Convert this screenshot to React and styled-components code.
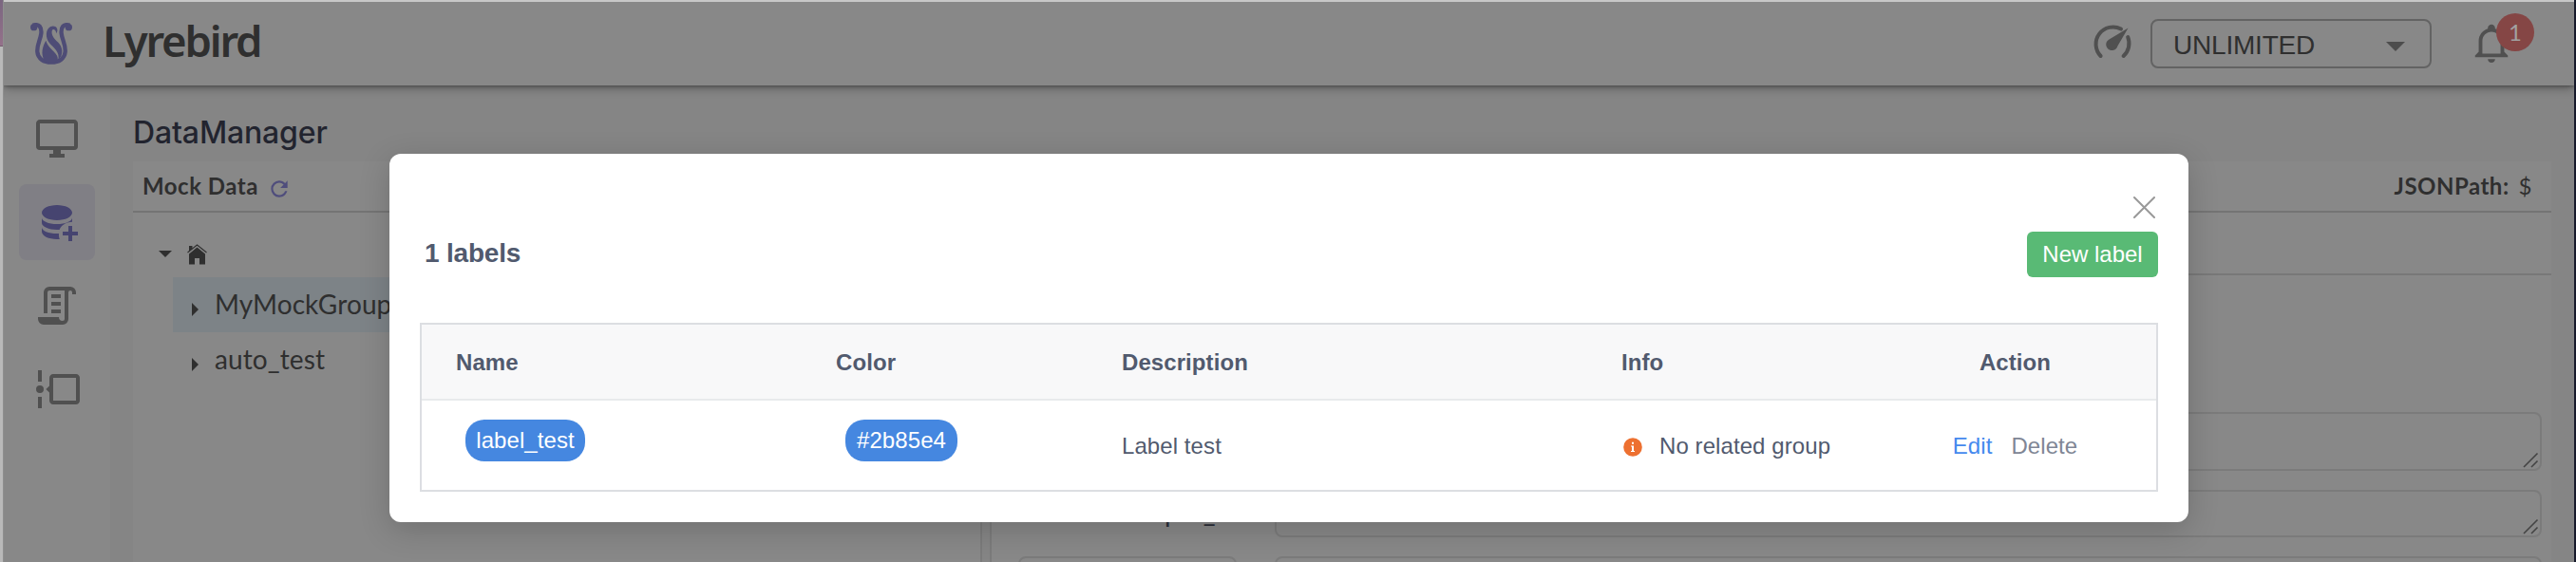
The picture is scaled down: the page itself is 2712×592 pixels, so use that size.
import React from "react";
import styled, { createGlobalStyle } from "styled-components";

const Global = createGlobalStyle`
  *{box-sizing:border-box}
  body{margin:0;overflow:hidden;background:#b9b9b9}
  svg{display:block;flex:none}
`;
const sans = `"Liberation Sans", Arial, sans-serif`;
const lato = `Lato, "Open Sans", sans-serif`;

const Screen = styled.div`
  width: 2712px;
  height: 592px;
  overflow: hidden;
  position: relative;
  display: grid;
  grid-template-columns: 4px 1fr 2px;
  background: #888;
`;
const LeftEdge = styled.div`
  display: flex;
  flex-direction: column;
  background: #b9b9b9;
  border-right: 1px solid #8f8f8f;
  &::before {
    content: "";
    height: 48px;
    background: linear-gradient(#7a6680, #94718a);
    border-bottom: 1px solid #735f6e;
  }
`;
const RightEdge = styled.div`
  background: #171a2b;
`;
const Page = styled.div`
  display: flex;
  flex-direction: column;
  height: 592px;
  border-top: 2px solid #c8c8c8;
  min-width: 0;
  overflow: hidden;
`;
const Header = styled.header`
  flex: none;
  height: 88px;
  display: flex;
  align-items: center;
  padding: 0 62px 0 28px;
  background: #888;
  box-shadow: 0 2px 10px rgba(0, 0, 0, 0.38), 0 1px 3px rgba(0, 0, 0, 0.25);
  z-index: 1;
`;
const Brand = styled.h1`
  margin: -9px 0 0 32px;
  font: 600 45.5px/60px "Noto Sans", sans-serif;
  color: #2f2f2f;
  letter-spacing: -2.2px;
  flex: 1;
`;
const Select = styled.div`
  width: 296px;
  height: 52px;
  margin: 0 40px 0 16px;
  padding: 4px 26px 0 22px;
  border: 2px solid #636363;
  border-radius: 8px;
  display: flex;
  align-items: center;
  justify-content: space-between;
  font: 28px/1 ${sans};
  letter-spacing: -0.2px;
  color: #2f2f2f;
`;
const Caret = styled.i`
  border: 10px solid transparent;
  border-top-color: #4d4d4d;
  border-bottom: 0;
  margin-top: 2px;
`;
const BellWrap = styled.div`
  position: relative;
  width: 48px;
  height: 48px;
`;
const Badge = styled.span`
  position: absolute;
  left: 28px;
  top: -8px;
  width: 40px;
  height: 40px;
  border-radius: 50%;
  background: #854645;
  font: 24px/40px ${lato};
  color: #a2a2a2;
  text-align: center;
`;
const Body = styled.div`
  flex: 1;
  display: flex;
  min-height: 0;
`;
const Side = styled.nav`
  width: 112px;
  padding: 16px;
  display: flex;
  flex-direction: column;
  gap: 8px;
  background: #888;
`;
const NavItem = styled.div`
  height: 80px;
  border-radius: 8px;
  display: grid;
  place-items: center;
  background: ${p => (p.$active ? "#807f85" : "transparent")};
`;
const Main = styled.main`
  flex: 1;
  background: #858585;
  padding: 0 24px;
  min-width: 0;
`;
const Title = styled.h2`
  margin: 27px 0 8px;
  font: 500 32px/45px Inter, sans-serif;
  letter-spacing: -0.15px;
  color: #22242f;
`;
const Panels = styled.div`
  display: flex;
  gap: 8px;
  height: 422px;
`;
const Panel = styled.section`
  background: #888;
  width: ${p => (p.$w ? p.$w + "px" : "auto")};
  flex: ${p => (p.$w ? "none" : 1)};
  ${p => (p.$w ? "border-right" : "border-left")}: 2px solid #7b7b7b;
`;
const PanelHead = styled.div`
  height: 54px;
  border-bottom: 2px solid #747474;
  padding: 0 20px 0 10px;
  display: flex;
  align-items: center;
  gap: 10px;
  font: 700 24px/1 ${lato};
  letter-spacing: 0.5px;
  color: #2f2f2f;
  justify-content: ${p => (p.$end ? "flex-end" : "flex-start")};
  svg {
    margin: 6px 0 0 -1px;
  }
`;
const Light = styled.span`
  font-weight: 400;
`;
const Tree = styled.div`
  padding: 14px 0 0 42px;
`;
const Root = styled.div`
  height: 54px;
  display: flex;
  align-items: center;
  gap: 16px;
  margin-left: -15px;
  padding-top: 5px;
`;
const Node = styled.div`
  height: 58px;
  display: flex;
  align-items: center;
  font: 28px/54px ${lato};
  letter-spacing: 0.1px;
  color: #2f2f2f;
  padding: 0 0 3px 20px;
  background: ${p => (p.$on ? "#7d8387" : "transparent")};
`;
const Arrow = styled.i`
  border: 7px solid transparent;
  border-left-color: #2f2f2f;
  border-right: 0;
  margin: 12px 17px 0 0;
`;
const Down = styled.i`
  border: 7px solid transparent;
  border-top-color: #2f2f2f;
  border-bottom: 0;
`;
const Toolbar = styled.div`
  height: 66px;
  border-bottom: 2px solid #787878;
`;
const Form = styled.div`
  padding: 144px 10px 0 28px;
  display: flex;
  flex-direction: column;
  gap: 20px;
`;
const Field = styled.div`
  display: grid;
  grid-template-columns: 230px 1fr;
  column-gap: 40px;
  height: ${p => p.$h}px;
`;
const FieldLabel = styled.div`
  font: 28px/46px ${lato};
  color: #2b2f39;
  text-align: right;
`;
const Box = styled.div`
  border: 2px solid #7b7b7b;
  border-radius: 8px;
  display: flex;
  align-items: flex-end;
  justify-content: flex-end;
  padding: 1px;
`;
const Modal = styled.div`
  position: absolute;
  left: 410px;
  top: 162px;
  width: 1894px;
  height: 388px;
  border-radius: 12px;
  background: #fff;
  box-shadow: 0 8px 32px rgba(0, 0, 0, 0.18);
  padding: 44px 32px 32px;
  display: flex;
  flex-direction: column;
`;
const CloseRow = styled.div`
  display: flex;
  justify-content: flex-end;
  height: 38px;
  padding: 1px 3px 0 0;
`;
const TitleRow = styled.div`
  display: flex;
  justify-content: space-between;
  align-items: center;
  height: 48px;
  padding-left: 5px;
  font: 700 28px/44px ${sans};
  letter-spacing: -0.2px;
  color: #515a6e;
`;
const Heading = styled.span`
  padding-bottom: 3px;
`;
const Button = styled.button`
  height: 48px;
  width: 138px;
  border: 0;
  border-radius: 6px;
  background: #59ba75;
  color: #fff;
  font: 24px/48px ${sans};
  padding: 0;
`;
const Table = styled.div`
  margin-top: 48px;
  height: 178px;
  border: 2px solid #dcdee2;
  font: 24px/1 ${sans};
  color: #515a6e;
`;
const Row = styled.div`
  display: grid;
  grid-template-columns: 400px 301px 526px 302px 1fr;
  padding: 0 36px;
  align-items: center;
  height: ${p => (p.$head ? 80 : 94)}px;
  ${p => p.$head && "background:#f8f8f9;border-bottom:2px solid #e8eaec;font-weight:700;"}
`;
const Cell = styled.div`
  display: flex;
  align-items: center;
  padding-top: 2px;
  letter-spacing: 0.08px;
  justify-content: ${p => (p.$center ? "center" : "flex-start")};
  svg {
    margin: 2px 18px 0 2px;
  }
`;
const Tag = styled.span`
  width: ${p => p.$w}px;
  height: 44px;
  border-radius: 20px;
  background: #4587e0;
  color: #fff;
  margin: -12px 0 0 ${p => p.$ml}px;
  text-align: center;
  line-height: 44px;
`;
const Edit = styled.span`
  color: #4589ee;
  margin-right: 20px;
`;
const Delete = styled.span`
  color: #808695;
`;

const Icon = ({ d, size = 48, color = "#505050" }) => (
  <svg width={size} height={size} viewBox="0 0 24 24" fill={color}>
    <path d={d} />
  </svg>
);

const paths = {
  monitor: "M21 16H3V4H21M21 2H3C1.9 2 1 2.9 1 4V16A2 2 0 0 0 3 18H10V20H8V22H16V20H14V18H21A2 2 0 0 0 23 16V4C23 2.9 22.1 2 21 2Z",
  database:
    "M12 3C7.6 3 4 4.8 4 7S7.6 11 12 11S20 9.2 20 7S16.4 3 12 3M4 9.6V12.4C4 14.4 7.6 16 12 16H13.3C14.3 13.7 16.5 12.2 19 12L20 11.9V9.6C20 11.5 16.4 13 12 13S4 11.5 4 9.6M4 14.6V17C4 19.2 7.6 21 12 21H13.4C13 20 12.9 19 13 18H12C7.6 18 4 16.6 4 14.6M18 14V17H15V19H18V22H20V19H23V17H20V14Z",
  script:
    "M15 20A1 1 0 0 0 16 19V4H8A1 1 0 0 0 7 5V16H5V5A3 3 0 0 1 8 2H19A3 3 0 0 1 22 5V6H20V5A1 1 0 0 0 19 4A1 1 0 0 0 18 5V19A3 3 0 0 1 15 22H5A3 3 0 0 1 2 19V18H13A2 2 0 0 0 15 20M9 6H14V8H9V6M9 10H14V12H9V10M9 14H14V16H9V14Z",
  timeline:
    "M2 2H4V8H2V2M2 16H4V22H2V16M5 12A2 2 0 1 1 1 12A2 2 0 1 1 5 12M22 4H10C8.9 4 8 4.9 8 6V10.2L6.2 12L8 13.8V18C8 19.1 8.9 20 10 20H22C23.1 20 24 19.1 24 18V6C24 4.9 23.1 4 22 4M22 18H10V6H22V18Z",
  refresh:
    "M17.65 6.35C16.2 4.9 14.21 4 12 4A8 8 0 0 0 4 12A8 8 0 0 0 12 20C15.73 20 18.84 17.45 19.73 14H17.65C16.83 16.33 14.61 18 12 18A6 6 0 0 1 6 12A6 6 0 0 1 12 6C13.66 6 15.14 6.69 16.22 7.78L13 11H20V4L17.65 6.35Z",
  bell: "M10 21H14C14 22.1 13.1 23 12 23S10 22.1 10 21M21 19V20H3V19L5 17V11C5 7.9 7.03 5.17 10 4.29V4C10 2.9 10.9 2 12 2S14 2.9 14 4V4.29C16.97 5.17 19 7.9 19 11V17L21 19M17 11C17 8.24 14.76 6 12 6S7 8.24 7 11V18H17V11Z",
};

const Logo = () => (
  <svg width="44" height="44" viewBox="0 0 132 132" fill="#4e4c76">
    <circle cx="11" cy="14" r="11" />
    <circle cx="121" cy="14" r="11" />
    <path
      d="M8 8C28 2 36 14 34 34C32 54 20 68 22 92C24 114 42 125 66 125S108 114 110 92C112 68 100 54 98 34C96 14 104 2 124 8"
      fill="none"
      stroke="#4e4c76"
      strokeWidth="13"
    />
    <path d="M49 56C38 76 32 98 44 118C52 130 78 130 86 118C92 96 58 86 49 56Z" />
    <path d="M82 34C92 18 78 6 64 12C48 20 46 46 60 64C74 80 94 92 88 118C106 100 102 76 88 62C74 50 66 38 68 26C70 18 80 20 82 34Z" />
  </svg>
);

const Gauge = () => (
  <svg width="48" height="48" viewBox="0 0 48 48" fill="#505050">
    <path
      d="M11.6 37A18 18 0 0 1 33 8.6M40.2 17A18 18 0 0 1 35.6 37"
      fill="none"
      stroke="#505050"
      strokeWidth="4"
      strokeLinecap="round"
    />
    <path d="M40.5 7.5L29.4 26.6A6.2 6.2 0 1 1 20.5 19.4Z" />
  </svg>
);

const House = () => (
  <svg width="21" height="22" viewBox="0 0 21 22" fill="#2f2f2f">
    <path d="M2 2H5.5V5L2 8.2ZM2 10.4L10.5 3.6L19 10.4V21.5H13V15H8V21.5H2Z" />
    <path d="M.5 9L10.5 1L20.5 9" fill="none" stroke="#2f2f2f" strokeWidth="1.1" />
  </svg>
);

const Grip = () => (
  <svg width="17" height="17" viewBox="0 0 17 17" stroke="#444" strokeWidth="1.6">
    <path d="M1 16L15.5 1.5M9 16L15.5 9.5" />
  </svg>
);

const Close = () => (
  <svg width="23" height="23" viewBox="0 0 23 23" stroke="#999" strokeWidth="2" strokeLinecap="round">
    <path d="M1 1L22 22M22 1L1 22" />
  </svg>
);

const InfoDot = () => (
  <svg width="20" height="20" viewBox="0 0 20 20">
    <circle cx="10" cy="10" r="9.8" fill="#ed7030" />
    <path d="M8 8.4H11V14H12V15H8V14H9V9.4H8ZM9 4.8H11V6.8H9Z" fill="#fff" />
  </svg>
);

export default function App() {
  return (
    <>
      <Global />
      <Screen>
        <LeftEdge />
        <Page>
          <Header>
            <Logo />
            <Brand>Lyrebird</Brand>
            <Gauge />
            <Select>
              UNLIMITED
              <Caret />
            </Select>
            <BellWrap>
              <Icon d={paths.bell} size={46} />
              <Badge>1</Badge>
            </BellWrap>
          </Header>
          <Body>
            <Side>
              <NavItem><Icon d={paths.monitor} /></NavItem>
              <NavItem $active><Icon d={paths.database} color="#464470" /></NavItem>
              <NavItem><Icon d={paths.script} /></NavItem>
              <NavItem><Icon d={paths.timeline} /></NavItem>
            </Side>
            <Main>
              <Title>DataManager</Title>
              <Panels>
                <Panel $w={894}>
                  <PanelHead>
                    Mock Data
                    <Icon d={paths.refresh} size={26} color="#4f4d7c" />
                  </PanelHead>
                  <Tree>
                    <Root><Down /><House /></Root>
                    <Node $on><Arrow />MyMockGroup</Node>
                    <Node><Arrow />auto_test</Node>
                  </Tree>
                </Panel>
                <Panel>
                  <PanelHead $end>JSONPath: <Light>$</Light></PanelHead>
                  <Toolbar />
                  <Form>
                    <Field $h={62}><FieldLabel /><Box><Grip /></Box></Field>
                    <Field $h={50}><FieldLabel>super_id</FieldLabel><Box><Grip /></Box></Field>
                    <Field $h={50}><Box /><Box /></Field>
                  </Form>
                </Panel>
              </Panels>
            </Main>
          </Body>
        </Page>
        <RightEdge />
        <Modal>
          <CloseRow><Close /></CloseRow>
          <TitleRow>
            <Heading>1 labels</Heading>
            <Button>New label</Button>
          </TitleRow>
          <Table>
            <Row $head>
              <Cell>Name</Cell>
              <Cell>Color</Cell>
              <Cell>Description</Cell>
              <Cell>Info</Cell>
              <Cell $center>Action</Cell>
            </Row>
            <Row>
              <Cell><Tag $w={126} $ml={10}>label_test</Tag></Cell>
              <Cell><Tag $w={118} $ml={10}>#2b85e4</Tag></Cell>
              <Cell>Label test</Cell>
              <Cell><InfoDot />No related group</Cell>
              <Cell $center><Edit>Edit</Edit><Delete>Delete</Delete></Cell>
            </Row>
          </Table>
        </Modal>
      </Screen>
    </>
  );
}
